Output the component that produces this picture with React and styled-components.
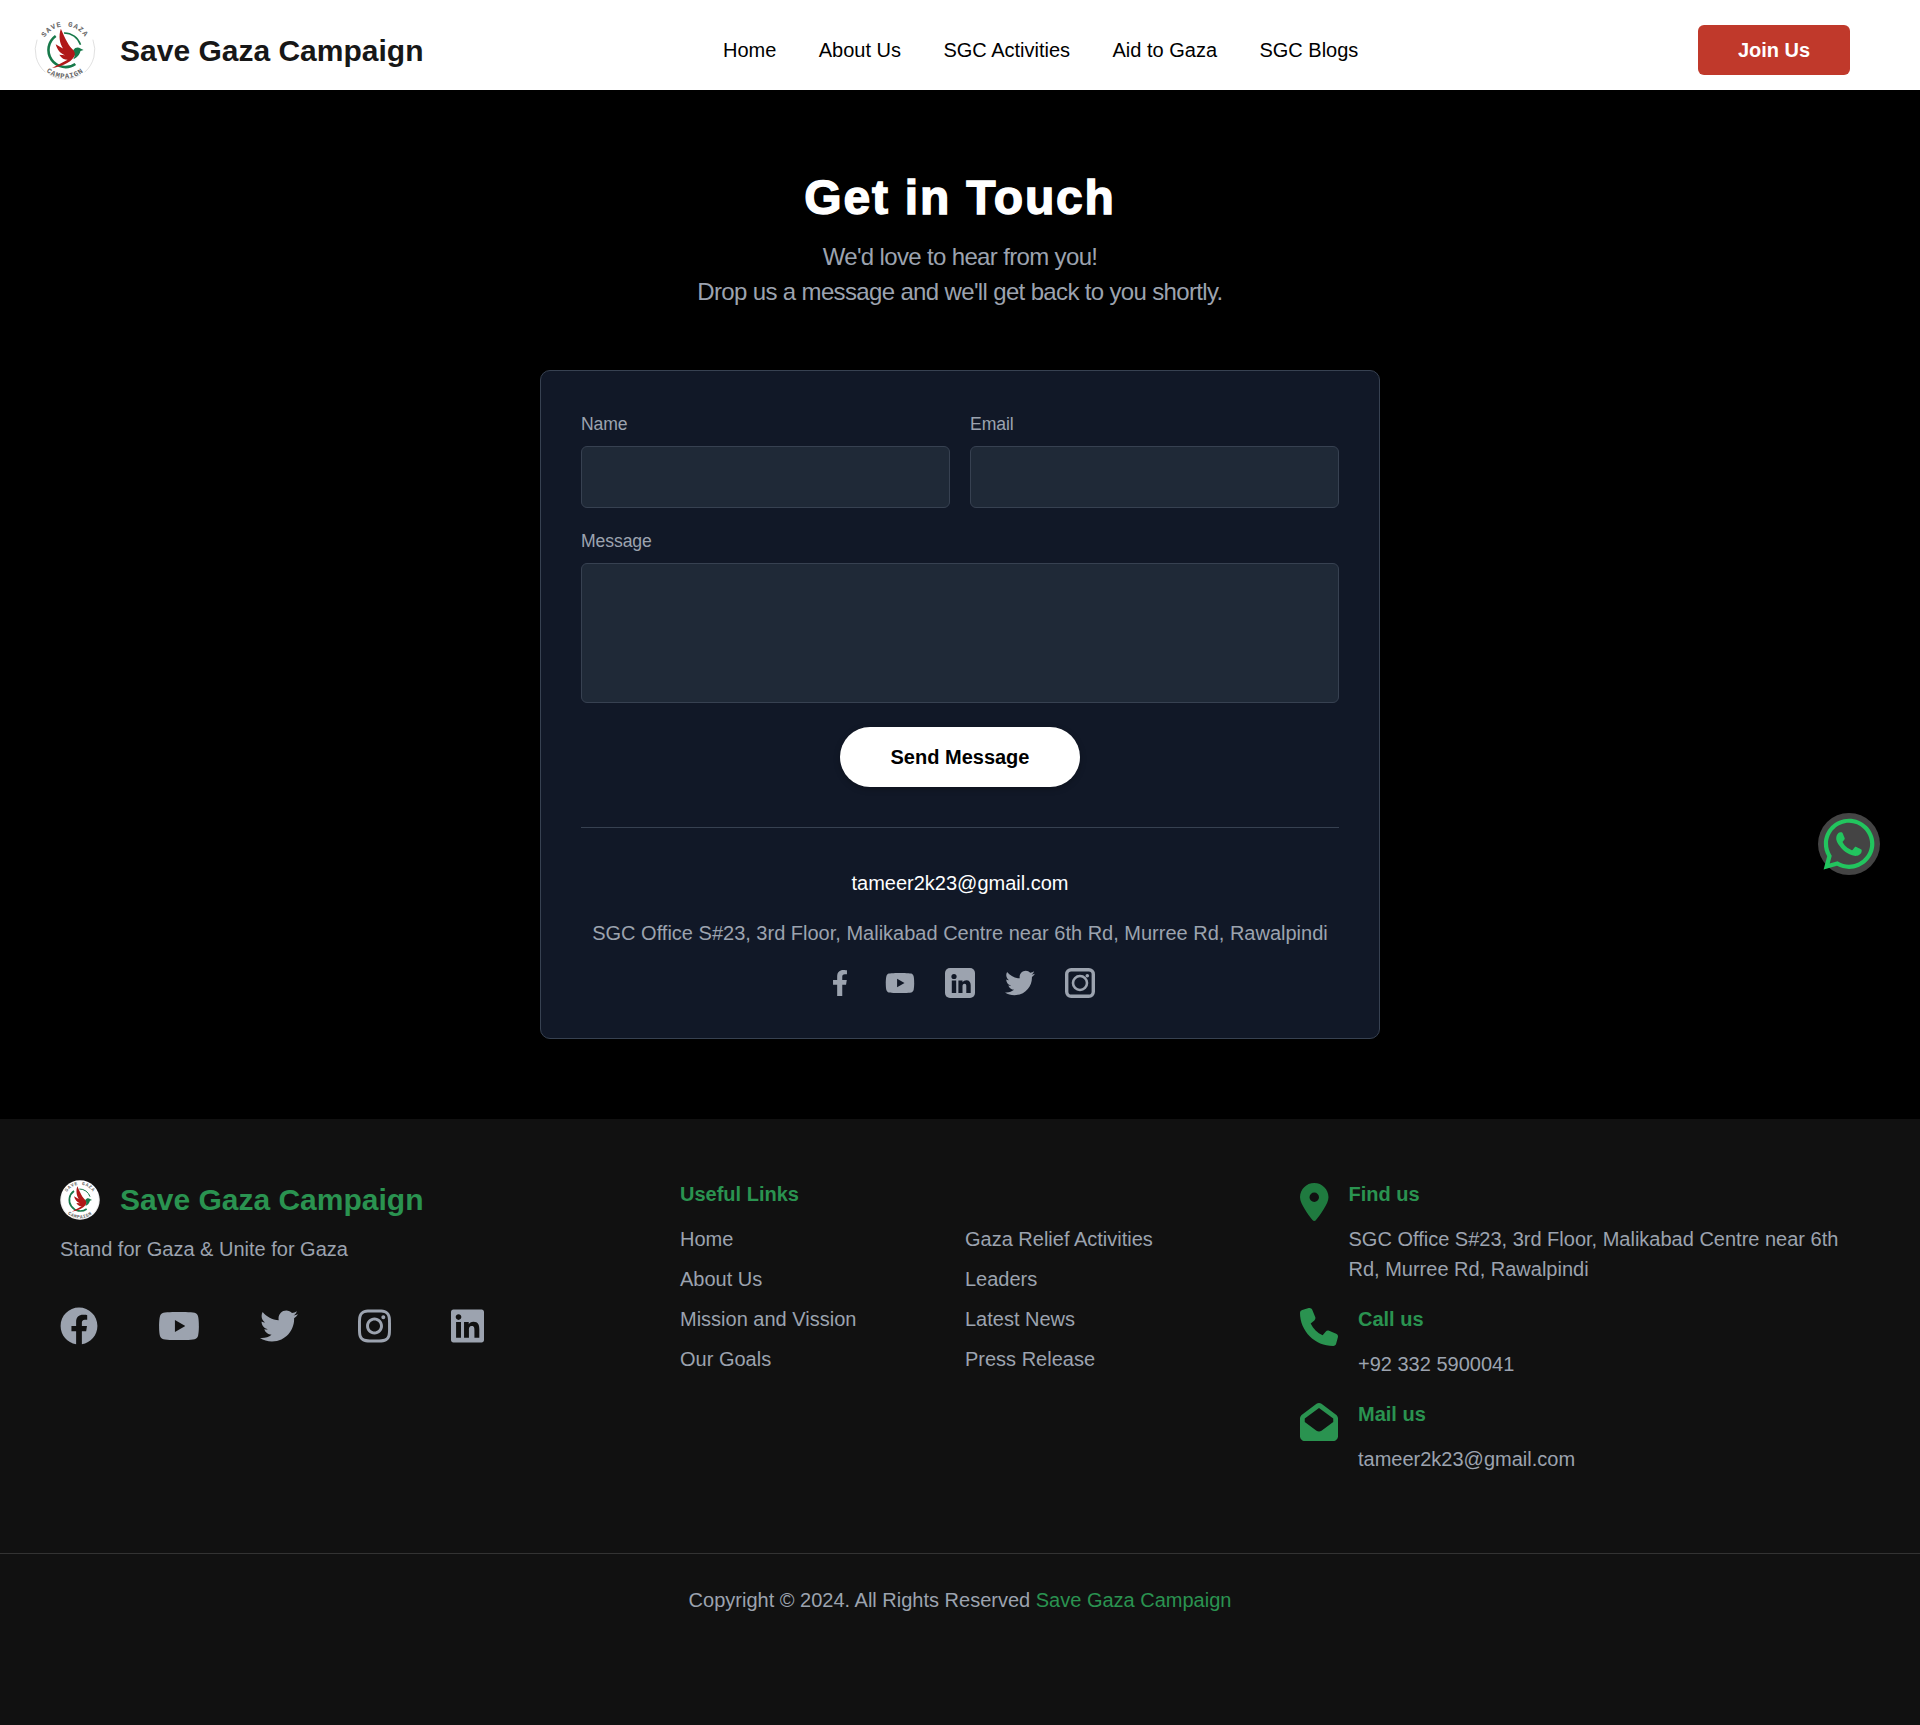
import React from "react";
import styled, { createGlobalStyle } from "styled-components";
import { FaFacebook, FaFacebookF, FaYoutube, FaLinkedin, FaTwitter, FaInstagram, FaWhatsapp } from "react-icons/fa";
import { FaLocationDot, FaPhone, FaEnvelopeOpen } from "react-icons/fa6";

const GlobalStyle = createGlobalStyle`
  html, body {
    margin: 0;
    padding: 0;
    background: #000;
    font-family: Arial, "Liberation Sans", sans-serif;
    text-rendering: optimizeSpeed;
  }
  * { box-sizing: border-box; }
  a { text-decoration: none; color: inherit; }
`;

const Page = styled.div`
  position: relative;
  width: 1920px;
  height: 1725px;
  display: flex;
  flex-direction: column;
`;

/* header */
const Header = styled.header`
  height: 90px;
  background: #fff;
  display: grid;
  grid-template-columns: 689px 1fr auto;
  align-items: center;
  padding: 10px 70px 0 34px;
`;

const Brand = styled.a`
  display: flex;
  align-items: center;
  gap: ${(p) => p.$gap}px;
`;

const BrandName = styled.span`
  font-size: 30px;
  line-height: 36px;
  font-weight: 700;
  padding-top: ${(p) => p.$drop || 0}px;
  color: ${(p) => p.$color};
`;

const Nav = styled.nav`
  display: flex;
  gap: 42.4px;
`;

const NavLink = styled.a`
  font-size: 20px;
  color: #000;
`;

const JoinButton = styled.button`
  width: 152px;
  height: 50px;
  border: 0;
  border-radius: 6px;
  background: #c0392b;
  color: #fff;
  font: 700 20px Arial, "Liberation Sans", sans-serif;
`;

/* contact section */
const Main = styled.main`
  height: 1029px;
  background: #000;
  display: flex;
  flex-direction: column;
  align-items: center;
  padding-top: 80px;
`;

const Title = styled.h1`
  margin: 0;
  font-size: 48px;
  line-height: 56px;
  font-weight: 900;
  letter-spacing: 1.8px;
  color: #fff;
  -webkit-text-stroke: 1.4px #fff;
`;

const Intro = styled.p`
  margin: 14px 0 0;
  font-size: 24px;
  line-height: 34.5px;
  letter-spacing: -0.65px;
  text-align: center;
  color: #9ca3af;
`;

const Card = styled.form`
  width: 840px;
  height: 669px;
  margin-top: 61px;
  padding: 40px;
  background: #111827;
  border: 1px solid #374151;
  border-radius: 10px;
  display: flex;
  flex-direction: column;
`;

const FieldRow = styled.div`
  display: grid;
  grid-template-columns: 1fr 1fr;
  gap: 20px;
`;

const Field = styled.label`
  display: block;
  margin-bottom: 20px;
`;

const FieldLabel = styled.span`
  display: block;
  font-size: 17.6px;
  line-height: 24px;
  letter-spacing: -0.1px;
  color: #9ca3af;
  padding-top: 1px;
  margin-bottom: 10px;
`;

const Input = styled.input`
  display: block;
  width: 100%;
  height: 62px;
  background: #1f2937;
  border: 1px solid #374151;
  border-radius: 6px;
`;

const TextArea = styled.textarea`
  display: block;
  width: 100%;
  height: 140px;
  background: #1f2937;
  border: 1px solid #374151;
  border-radius: 6px;
  resize: none;
`;

const SendButton = styled.button`
  align-self: center;
  width: 240px;
  height: 60px;
  margin-top: 4px;
  flex: none;
  border: 0;
  border-radius: 30px;
  background: #fff;
  color: #000;
  font: 700 20px Arial, "Liberation Sans", sans-serif;
  box-shadow: 0 2px 6px rgba(0, 0, 0, 0.25);
`;

const Divider = styled.hr`
  width: 100%;
  margin: 40px 0 0;
  border: 0;
  border-top: 1px solid #374151;
`;

const ContactMail = styled.a`
  margin-top: 43px;
  font-size: 20px;
  line-height: 24px;
  color: #fff;
  text-align: center;
`;

const ContactAddress = styled.p`
  margin: 26px 0 0;
  font-size: 20px;
  line-height: 24px;
  color: #9ca3af;
  text-align: center;
  white-space: nowrap;
`;

const CardSocials = styled.div`
  margin-top: 23px;
  display: flex;
  justify-content: center;
  gap: 30px;
  color: #9ca3af;
`;

const SocialSlot = styled.a`
  width: 30px;
  height: 30px;
  display: flex;
  align-items: center;
  justify-content: center;
`;

/* footer */
const Footer = styled.footer`
  flex: 1;
  background: #111;
  display: flex;
  flex-direction: column;
`;

const FooterTop = styled.div`
  height: 435px;
  padding: 61px 60px 0;
  display: grid;
  grid-template-columns: 620px 620px 1fr;
  border-bottom: 1px solid #333;
`;

const Tagline = styled.p`
  margin: 15px 0 0;
  font-size: 20px;
  line-height: 28px;
  color: #9ca3af;
`;

const FooterSocials = styled.div`
  margin-top: 42px;
  display: flex;
  align-items: center;
  gap: 60px;
  color: #9ca3af;
  font-size: 38px;
`;

const NarrowInstagram = styled(FaInstagram)`
  width: 33px;
`;

const NarrowLinkedin = styled(FaLinkedin)`
  width: 33px;
`;

const FooterHeading = styled.h4`
  margin: 0;
  font-size: 20px;
  line-height: 28px;
  font-weight: 700;
  color: #2a9350;
`;

const LinkGrid = styled.div`
  margin-top: 17px;
  display: grid;
  grid-template-columns: 285px 1fr;
  row-gap: 12px;
`;

const FooterLink = styled.a`
  font-size: 20px;
  line-height: 28px;
  color: #9ca3af;
`;

const InfoRow = styled.div`
  display: flex;
  gap: 20px;
  margin-bottom: 21px;
`;

const InfoIcon = styled.span`
  display: block;
  flex: none;
  margin-top: 3px;
  line-height: 0;
  color: ${(p) => p.$color};
`;

const PinIcon = styled(FaLocationDot)`
  width: 28.5px;
  height: 38px;
`;

const InfoText = styled.p`
  margin: 16px 0 0;
  font-size: 20px;
  line-height: 30px;
  color: #9ca3af;
`;

const Copyright = styled.p`
  margin: 32px 0 0;
  text-align: center;
  font-size: 20px;
  line-height: 28px;
  color: #9ca3af;
`;

const CopyrightName = styled.span`
  color: #2a9350;
`;

/* floating whatsapp button */
const WhatsappButton = styled.a`
  position: absolute;
  left: 1818px;
  top: 813px;
  width: 62px;
  height: 62px;
  border-radius: 50%;
  background: #444;
  color: #22c55e;
  display: flex;
  align-items: center;
  justify-content: center;
  font-size: 58px;
`;

function Logo({ size, id }) {
  return (
    <svg width={size} height={size} viewBox="0 0 120 120" role="img" aria-label="Save Gaza Campaign logo">
      <circle cx="60" cy="60" r="59" fill="#fff" />
      <path d="M6 40A57 57 0 0 0 22 103M114 40A57 57 0 0 1 98 103M30 108A57 57 0 0 0 90 108" fill="none" stroke="#ccc" strokeWidth="1.2" />
      <defs>
        <path id={`${id}Top`} d="M14 60a46 46 0 0 1 92 0" />
        <path id={`${id}Bottom`} d="M5 60a55 55 0 0 0 110 0" />
      </defs>
      <text fontSize="14" fontWeight="700" fill="#666" fontFamily="'Liberation Mono', monospace" letterSpacing="2">
        <textPath href={`#${id}Top`} startOffset="50%" textAnchor="middle">SAVE GAZA</textPath>
      </text>
      <text fontSize="14" fontWeight="700" fill="#666" fontFamily="'Liberation Mono', monospace" letterSpacing="1.5">
        <textPath href={`#${id}Bottom`} startOffset="50%" textAnchor="middle">CAMPAIGN</textPath>
      </text>
      <path d="M42 33A33 33 0 1 0 80 87" fill="none" stroke="#17794a" strokeWidth="5" />
      <path d="M58 27A33 33 0 0 1 90 50" fill="none" stroke="#17794a" strokeWidth="3" />
      <path
        d="M52 19C47 34 50 47 56 57L42 49C45 60 51 67 60 70L49 69C53 76 59 79 65 79L35 95C52 92 70 85 77 74C82 67 81 63 76 60C68 54 60 38 52 19Z"
        fill="#b01818"
      />
      <path d="M76 60C80 54 86 54 90 57L96 60L90 62C88 70 82 76 76 78C80 72 80 64 76 60Z" fill="#17794a" />
    </svg>
  );
}

function CardLinkedin() {
  return (
    <svg width="30" height="30" viewBox="0 0 30 30" aria-hidden="true">
      <rect width="30" height="30" rx="5" fill="currentColor" />
      <circle cx="9" cy="8.5" r="2.6" fill="#111827" />
      <path d="M6.8 12.5h4.4V25H6.8zM13.4 12.5h4.1v1.8c.9-1.4 2.3-2.1 3.9-2.1 3 0 4.3 2 4.3 5V25h-4.4v-7c0-1.5-.5-2.3-1.8-2.3-1.4 0-2 1-2 2.4V25h-4.1z" fill="#111827" />
    </svg>
  );
}

function CardInstagram() {
  return (
    <svg width="30" height="30" viewBox="0 0 30 30" aria-hidden="true">
      <rect x="1.7" y="1.7" width="26.6" height="26.6" rx="4.5" fill="none" stroke="currentColor" strokeWidth="3.4" />
      <circle cx="15" cy="15" r="7" fill="none" stroke="currentColor" strokeWidth="2.6" />
      <circle cx="22.3" cy="7.7" r="1.8" fill="currentColor" />
    </svg>
  );
}

const usefulLinks = [
  ["Home", "Gaza Relief Activities"],
  ["About Us", "Leaders"],
  ["Mission and Vission", "Latest News"],
  ["Our Goals", "Press Release"],
];

export default function App() {
  return (
    <Page>
      <GlobalStyle />
      <Header>
        <Brand $gap={24}>
          <Logo size={62} id="headerLogo" />
          <BrandName $color="#171717" $drop={2}>Save Gaza Campaign</BrandName>
        </Brand>
        <Nav>
          <NavLink>Home</NavLink>
          <NavLink>About Us</NavLink>
          <NavLink>SGC Activities</NavLink>
          <NavLink>Aid to Gaza</NavLink>
          <NavLink>SGC Blogs</NavLink>
        </Nav>
        <JoinButton type="button">Join Us</JoinButton>
      </Header>

      <Main>
        <Title>Get in Touch</Title>
        <Intro>
          We'd love to hear from you!
          <br />
          Drop us a message and we'll get back to you shortly.
        </Intro>
        <Card>
          <FieldRow>
            <Field>
              <FieldLabel>Name</FieldLabel>
              <Input />
            </Field>
            <Field>
              <FieldLabel>Email</FieldLabel>
              <Input />
            </Field>
          </FieldRow>
          <Field>
            <FieldLabel>Message</FieldLabel>
            <TextArea />
          </Field>
          <SendButton type="button">Send Message</SendButton>
          <Divider />
          <ContactMail>tameer2k23@gmail.com</ContactMail>
          <ContactAddress>
            SGC Office S#23, 3rd Floor, Malikabad Centre near 6th Rd, Murree Rd, Rawalpindi
          </ContactAddress>
          <CardSocials>
            <SocialSlot><FaFacebookF size={26} /></SocialSlot>
            <SocialSlot><FaYoutube size={30} /></SocialSlot>
            <SocialSlot><CardLinkedin /></SocialSlot>
            <SocialSlot><FaTwitter size={30} /></SocialSlot>
            <SocialSlot><CardInstagram /></SocialSlot>
          </CardSocials>
        </Card>
      </Main>

      <Footer>
        <FooterTop>
          <div>
            <Brand $gap={20}>
              <Logo size={40} id="footerLogo" />
              <BrandName $color="#2a9350">Save Gaza Campaign</BrandName>
            </Brand>
            <Tagline>Stand for Gaza &amp; Unite for Gaza</Tagline>
            <FooterSocials>
              <FaFacebook />
              <FaYoutube size={42} />
              <FaTwitter />
              <NarrowInstagram />
              <NarrowLinkedin />
            </FooterSocials>
          </div>
          <div>
            <FooterHeading>Useful Links</FooterHeading>
            <LinkGrid>
              {usefulLinks.flat().map((label) => (
                <FooterLink key={label}>{label}</FooterLink>
              ))}
            </LinkGrid>
          </div>
          <div>
            <InfoRow>
              <InfoIcon $color="#1f7a3f"><PinIcon /></InfoIcon>
              <div>
                <FooterHeading>Find us</FooterHeading>
                <InfoText>
                  SGC Office S#23, 3rd Floor, Malikabad Centre near 6th Rd, Murree Rd, Rawalpindi
                </InfoText>
              </div>
            </InfoRow>
            <InfoRow>
              <InfoIcon $color="#2a9350"><FaPhone size={38} /></InfoIcon>
              <div>
                <FooterHeading>Call us</FooterHeading>
                <InfoText>+92 332 5900041</InfoText>
              </div>
            </InfoRow>
            <InfoRow>
              <InfoIcon $color="#2a9350"><FaEnvelopeOpen size={38} /></InfoIcon>
              <div>
                <FooterHeading>Mail us</FooterHeading>
                <InfoText>tameer2k23@gmail.com</InfoText>
              </div>
            </InfoRow>
          </div>
        </FooterTop>
        <Copyright>
          Copyright © 2024. All Rights Reserved <CopyrightName>Save Gaza Campaign</CopyrightName>
        </Copyright>
      </Footer>

      <WhatsappButton><FaWhatsapp /></WhatsappButton>
    </Page>
  );
}
